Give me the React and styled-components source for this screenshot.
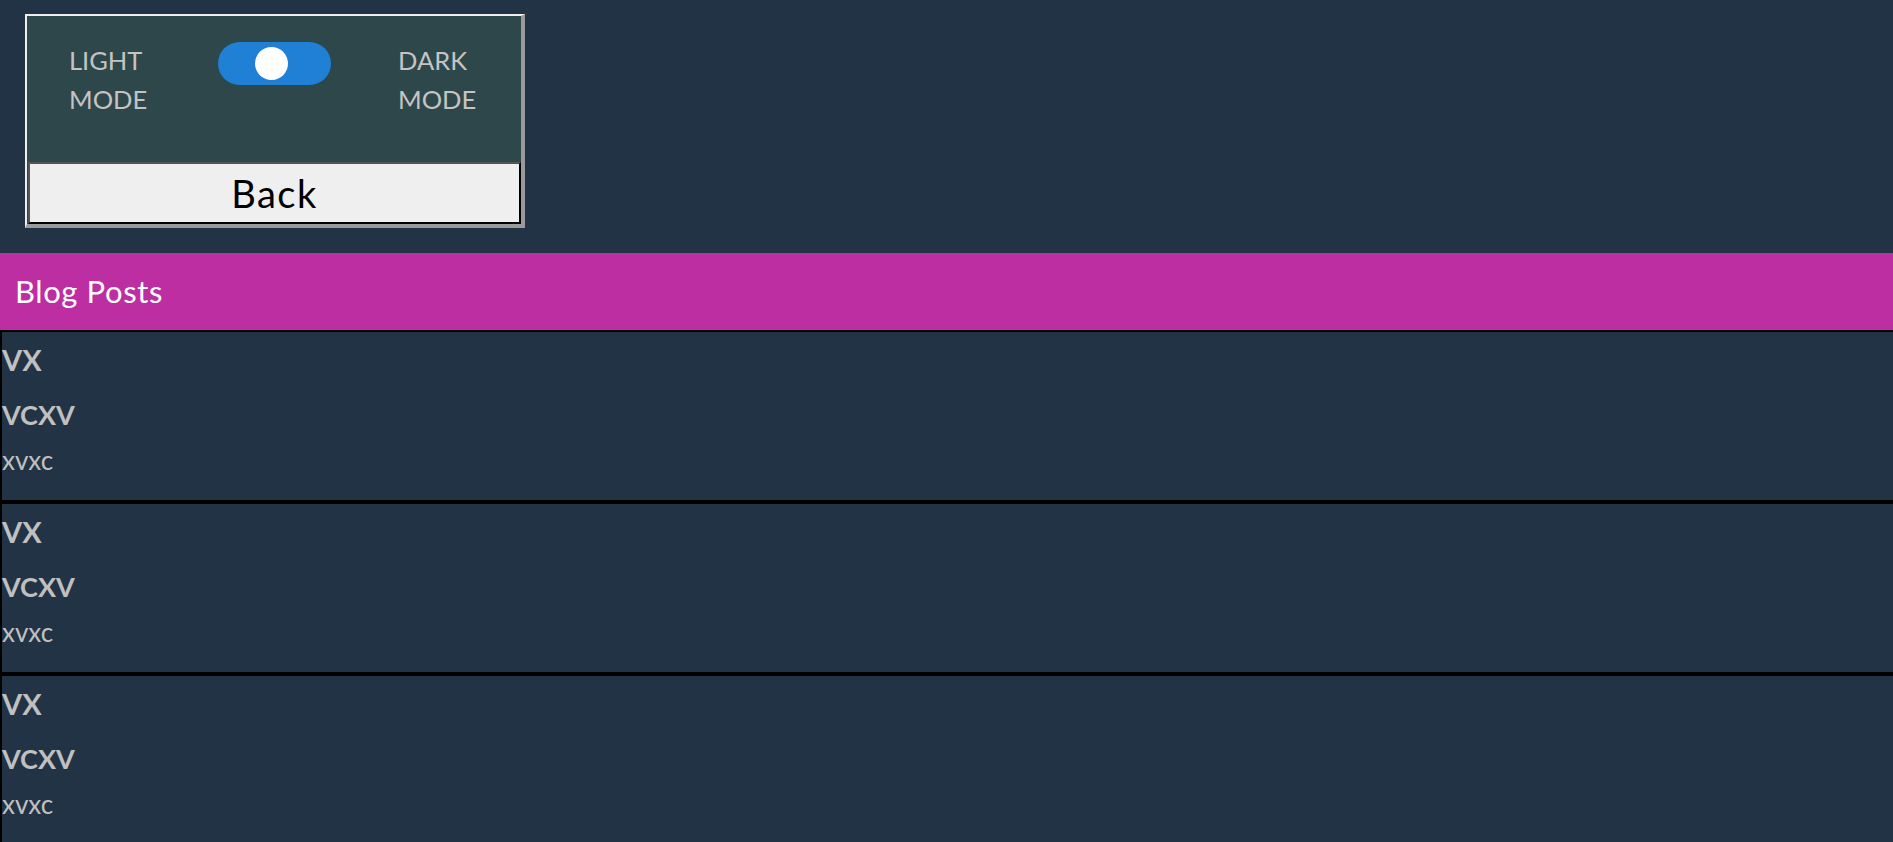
import styled, { createGlobalStyle } from "styled-components";

const GlobalStyle = createGlobalStyle`
body{
    margin:0;
    background-color:#223345;
    font-family: Lato, "Liberation Sans", sans-serif;
    overflow-x: hidden;
}
`

export default function App() {
    const posts = [1, 2, 3]
    return (
        <Page>
            <GlobalStyle />
            <Top>
                <Card>
                    <ModePanel>
                        <Label>LIGHT<br />MODE</Label>
                        <Track><Knob /></Track>
                        <Label>DARK<br />MODE</Label>
                    </ModePanel>
                    <BackButton>Back</BackButton>
                </Card>
            </Top>
            <BlogHeader>Blog Posts</BlogHeader>
            {posts.map((p) => (
                <Post key={p}>
                    <Title>vx</Title>
                    <Subtitle>vcxv</Subtitle>
                    <Body>xvxc</Body>
                </Post>
            ))}
        </Page>
    )
}

const Page = styled.div`
min-height: 100vh;
`
const Top = styled.div`
padding: 14px 0 25px 25px;
`
const Card = styled.div`
width: 500px;
box-sizing: border-box;
border-top: 2px solid #efefef;
border-left: 2px solid #efefef;
border-right: 4px solid #9a9a9a;
border-bottom: 4px solid #9a9a9a;
padding: 0 0 0 1px;
background-color:#2e474a;
`
const ModePanel = styled.div`
height: 146px;
box-sizing: border-box;
padding: 25px 0 0 41px;
display: grid;
grid-template-columns: 149px 180px 1fr;
align-items: start;
`
const Label = styled.div`
color:#c4c4c4;
font-size: 25.5px;
line-height: 38.6px;
`
const Track = styled.div`
width: 113px;
height: 43px;
margin-top: 1px;
border-radius: 22px;
background-color:#1f80d6;
display: flex;
align-items: center;
padding-left: 37px;
box-sizing: border-box;
`
const Knob = styled.div`
width: 33px;
height: 33px;
border-radius: 50%;
background-color:#ffffff;
`
const BackButton = styled.button`
display: block;
width: 100%;
height: 62px;
box-sizing: border-box;
margin: 0;
padding: 0;
background-color:#efefef;
border-top: 2px solid #555555;
border-left: 2px solid #555555;
border-right: 2px solid #000000;
border-bottom: 2px solid #000000;
font-family: Lato, "Liberation Sans", sans-serif;
font-size: 38px;
line-height: 43px;
letter-spacing: 1.5px;
color:#000000;
`
const BlogHeader = styled.div`
height: 77px;
box-sizing: border-box;
padding: 20px 15px 0;
background-color:#bc2ea2;
color:#ffffff;
font-size: 31px;
line-height: 36px;
letter-spacing: 0.6px;
`
const Post = styled.div`
width: 100%;
border: 2px solid #000000;
color:#c0c0c0;
display: flow-root;
`
const Title = styled.h2`
margin: 10px 0 0;
font-size: 29px;
line-height: 35px;
font-weight: 700;
text-transform: uppercase;
`
const Subtitle = styled.h3`
margin: 22px 0 0;
font-size: 27px;
line-height: 32px;
font-weight: 700;
text-transform: uppercase;
`
const Body = styled.p`
margin: 14px 0 24px;
font-size: 26px;
line-height: 31px;
`
